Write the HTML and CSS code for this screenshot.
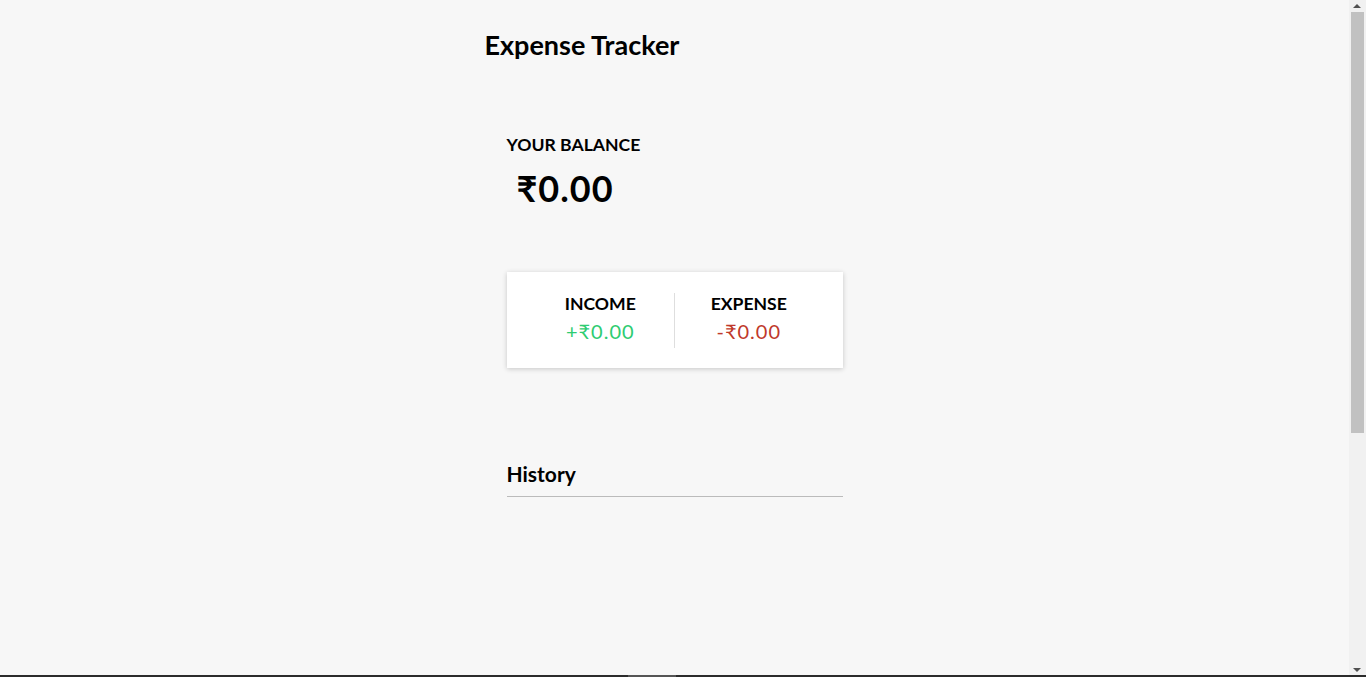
FILE: index.html
```html
<!DOCTYPE html>
<html lang="en">
<head>
<meta charset="UTF-8">
<title>Expense Tracker</title>
<link rel="stylesheet" href="styles.css">
</head>
<body>
<div class="page">
  <h2 class="title">Expense Tracker</h2>
  <div class="container">
    <h4 class="label balance-label">Your Balance</h4>
    <h1 class="balance">₹0.00</h1>

    <div class="inc-exp">
      <div class="col col-left">
        <h4 class="label">Income</h4>
        <p class="money plus">+₹0.00</p>
      </div>
      <div class="col">
        <h4 class="label">Expense</h4>
        <p class="money minus">-₹0.00</p>
      </div>
    </div>

    <h3 class="section">History</h3>
    <ul class="list"></ul>

    <h3 class="section">Add new transaction</h3>
    <form class="form">
      <div class="form-control">
        <label for="text">Text</label>
        <input type="text" id="text" placeholder="Enter text...">
      </div>
      <div class="form-control">
        <label for="amount">Amount<br>(negative - expense, positive - income)</label>
        <input type="number" id="amount" placeholder="Enter amount...">
      </div>
      <button class="btn" type="button">Add transaction</button>
    </form>
  </div>
</div>
<div class="scrollbar">
  <span class="sb-arrow sb-up"></span>
  <span class="sb-thumb"></span>
  <span class="sb-arrow sb-down"></span>
</div>
<div class="taskbar"><span class="taskbar-seg"></span></div>
</body>
</html>
```

FILE: styles.css
```css
* { box-sizing: border-box; }

body {
  margin: 0;
  padding-right: 17px;
  background: #f7f7f7;
  font-family: Lato, "Open Sans", sans-serif;
  color: #000;
}

.page {
  width: 380px;
  margin: 0 auto;
  padding-top: 29px;
  padding-bottom: 60px;
}

.title {
  margin: 0;
  font-size: 27px;
  font-weight: 700;
  line-height: 1.2;
}

.container {
  margin: 0 22px;
}

.label {
  margin: 0;
  font-size: 17.6px;
  font-weight: 700;
  text-transform: uppercase;
  line-height: 1.2;
}

.balance-label {
  margin-top: 73px;
}

.balance {
  margin: 11px 0 0 10px;
  font-size: 36px;
  font-weight: 700;
  letter-spacing: 1px;
  line-height: 1.2;
}

.inc-exp {
  margin-top: 62px;
  background: #fff;
  box-shadow: 0 1px 5px rgba(0, 0, 0, 0.2);
  padding: 21px 20px 20px;
  display: flex;
}

.col {
  flex: 1;
  text-align: center;
}

.col-left {
  border-right: 1px solid #dedede;
}

.money {
  margin: 5px 0;
  font-size: 20px;
  letter-spacing: 1px;
  line-height: 1.2;
}

.plus { color: #2ecc71; }
.minus { color: #c0392b; }

.section {
  margin: 93px 0 0;
  padding-bottom: 10px;
  border-bottom: 1px solid #bbb;
  font-size: 21px;
  font-weight: 700;
  line-height: 1.2;
}

.list {
  list-style: none;
  margin: 0;
  padding: 0;
  height: 80px;
}

.form {
  margin-top: 10px;
}

.form-control {
  margin: 10px 0;
}

.form-control label {
  display: inline-block;
  margin: 10px 0;
  font-size: 18px;
}

.form-control input {
  display: block;
  width: 100%;
  border: 1px solid #dedede;
  border-radius: 2px;
  padding: 10px;
  font-size: 16px;
}

.btn {
  display: block;
  width: 100%;
  margin: 10px 0 30px;
  padding: 10px;
  border: 0;
  background: #9c88ff;
  color: #fff;
  font-size: 16px;
  box-shadow: 0 1px 3px rgba(0, 0, 0, 0.1);
}

.scrollbar {
  position: fixed;
  top: 0;
  right: 0;
  bottom: 0;
  width: 17px;
  background: #f1f1f1;
}

.sb-thumb {
  position: absolute;
  left: 2px;
  right: 2px;
  top: 12px;
  height: 421px;
  background: #c1c1c1;
}

.sb-arrow {
  position: absolute;
  left: 4px;
  width: 0;
  height: 0;
  border-left: 4px solid transparent;
  border-right: 4px solid transparent;
}

.sb-up {
  top: 4px;
  border-bottom: 4px solid #505050;
}

.sb-down {
  bottom: 5px;
  border-top: 4px solid #505050;
}

.taskbar {
  position: fixed;
  left: 0;
  right: 0;
  bottom: 0;
  height: 2px;
  background: #2b2b2b;
}

.taskbar-seg {
  position: absolute;
  left: 628px;
  top: 0;
  width: 48px;
  height: 2px;
  background: #555;
}
```
